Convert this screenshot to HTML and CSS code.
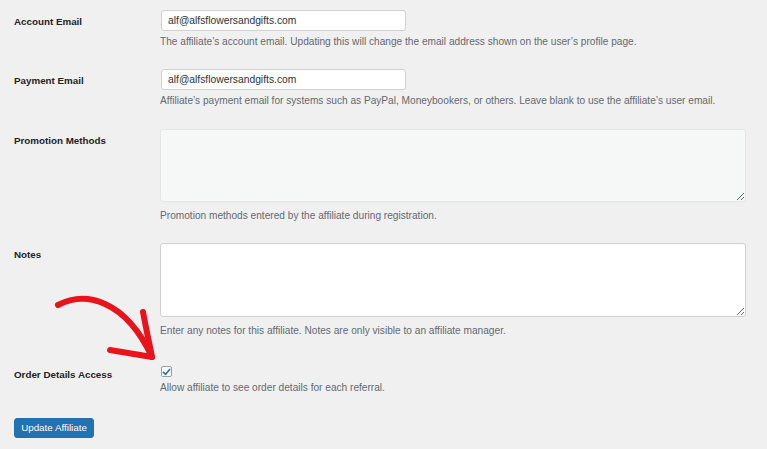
FILE: index.html
```html
<!DOCTYPE html>
<html lang="en">
<head>
<meta charset="utf-8">
<title>Edit Affiliate</title>
<link rel="stylesheet" href="styles.css">
</head>
<body>
<form class="form">
  <div class="row row--r1">
    <label class="label">Account Email</label>
    <div class="field">
      <input class="text-input" type="text" value="alf@alfsflowersandgifts.com">
      <p class="desc">The affiliate’s account email. Updating this will change the email address shown on the user’s profile page.</p>
    </div>
  </div>
  <div class="row row--r2">
    <label class="label">Payment Email</label>
    <div class="field">
      <input class="text-input" type="text" value="alf@alfsflowersandgifts.com">
      <p class="desc">Affiliate’s payment email for systems such as PayPal, Moneybookers, or others. Leave blank to use the affiliate’s user email.</p>
    </div>
  </div>
  <div class="row row--r3">
    <label class="label">Promotion Methods</label>
    <div class="field">
      <textarea class="area area--readonly" readonly></textarea>
      <p class="desc desc--area">Promotion methods entered by the affiliate during registration.</p>
    </div>
  </div>
  <div class="row row--r4">
    <label class="label">Notes</label>
    <div class="field">
      <textarea class="area area--notes"></textarea>
      <p class="desc desc--area">Enter any notes for this affiliate. Notes are only visible to an affiliate manager.</p>
    </div>
  </div>
  <div class="row row--r5">
    <label class="label label--check">Order Details Access</label>
    <div class="field">
      <span class="checkbox"><svg viewBox="0 0 12 12" width="10" height="10"><path d="M2 6.4 L4.8 9.1 L10.2 2.6" fill="none" stroke="#2271b1" stroke-width="2.2" stroke-linecap="round" stroke-linejoin="round"/></svg></span>
      <p class="desc">Allow affiliate to see order details for each referral.</p>
    </div>
  </div>
  <div class="submit">
    <button class="button" type="button">Update Affiliate</button>
  </div>
</form>
<svg class="arrow" viewBox="0 0 767 449" width="767" height="449">
  <path d="M58 305 C 85 291, 125 299, 152 357" fill="none" stroke="#e8131b" stroke-width="6" stroke-linecap="round"/>
  <path d="M143 312 C 146 328, 149 342, 152 357 L 110 350" fill="none" stroke="#e8131b" stroke-width="6" stroke-linecap="round" stroke-linejoin="round"/>
</svg>
</body>
</html>
```
FILE: styles.css
```css
html, body {
  margin: 0;
  padding: 0;
  background: #f0f0f1;
}
body {
  position: relative;
  width: 767px;
  height: 449px;
  overflow: hidden;
  font-family: "Liberation Sans", Arial, sans-serif;
  font-size: 10px;
  color: #1d2327;
}
.form {
  padding-left: 14px;
}
.row {
  display: grid;
  grid-template-columns: 146px 586px;
  align-items: start;
  padding-top: 10px;
}
.row--r1 { padding-bottom: 11px; }
.row--r2 { padding-bottom: 12px; }
.row--r3 { padding-bottom: 11px; }
.row--r4 { padding-bottom: 19px; }
.row--r5 { padding-bottom: 14px; }
.label {
  font-weight: bold;
  font-size: 9.8px;
  line-height: 13px;
  margin-top: 4.5px;
  color: #1d2327;
}
.label--check {
  margin-top: 2px;
}
.field {
  display: flex;
  flex-direction: column;
  align-items: flex-start;
}
.text-input {
  box-sizing: border-box;
  width: 245px;
  height: 21px;
  margin: 0 0 0 1px;
  padding: 0 6px;
  border: 1px solid #cfd0d2;
  border-radius: 3px;
  background: #fff;
  font-family: inherit;
  font-size: 10.3px;
  color: #2c3338;
}
.desc {
  margin: 4px 0 0;
  font-size: 10.15px;
  line-height: 13px;
  color: #646970;
  white-space: nowrap;
}
.desc--area {
  margin-top: 7px;
}
.area {
  display: block;
  box-sizing: border-box;
  width: 586px;
  margin: 0;
  border-radius: 3px;
  font-family: inherit;
  font-size: 10px;
}
.area--readonly {
  height: 73px;
  background: #f6f7f7;
  border: 1px solid #e4e5e6;
}
.area--notes {
  height: 74px;
  background: #fff;
  border: 1px solid #cfd0d2;
}
.checkbox {
  box-sizing: border-box;
  width: 11px;
  height: 11px;
  margin-left: 1px;
  border: 1px solid #9a9da2;
  border-radius: 2px;
  background: #fff;
  display: flex;
  align-items: center;
  justify-content: center;
}
.checkbox svg {
  display: block;
}
.submit {
  padding-top: 10px;
}
.button {
  box-sizing: border-box;
  width: 80px;
  height: 20px;
  padding: 0;
  border: 1px solid #2271b1;
  border-radius: 3px;
  background: #2271b1;
  color: #fff;
  font-family: inherit;
  font-size: 9.8px;
  line-height: 18px;
  text-align: center;
}
.arrow {
  position: absolute;
  left: 0;
  top: 0;
  pointer-events: none;
}
```
